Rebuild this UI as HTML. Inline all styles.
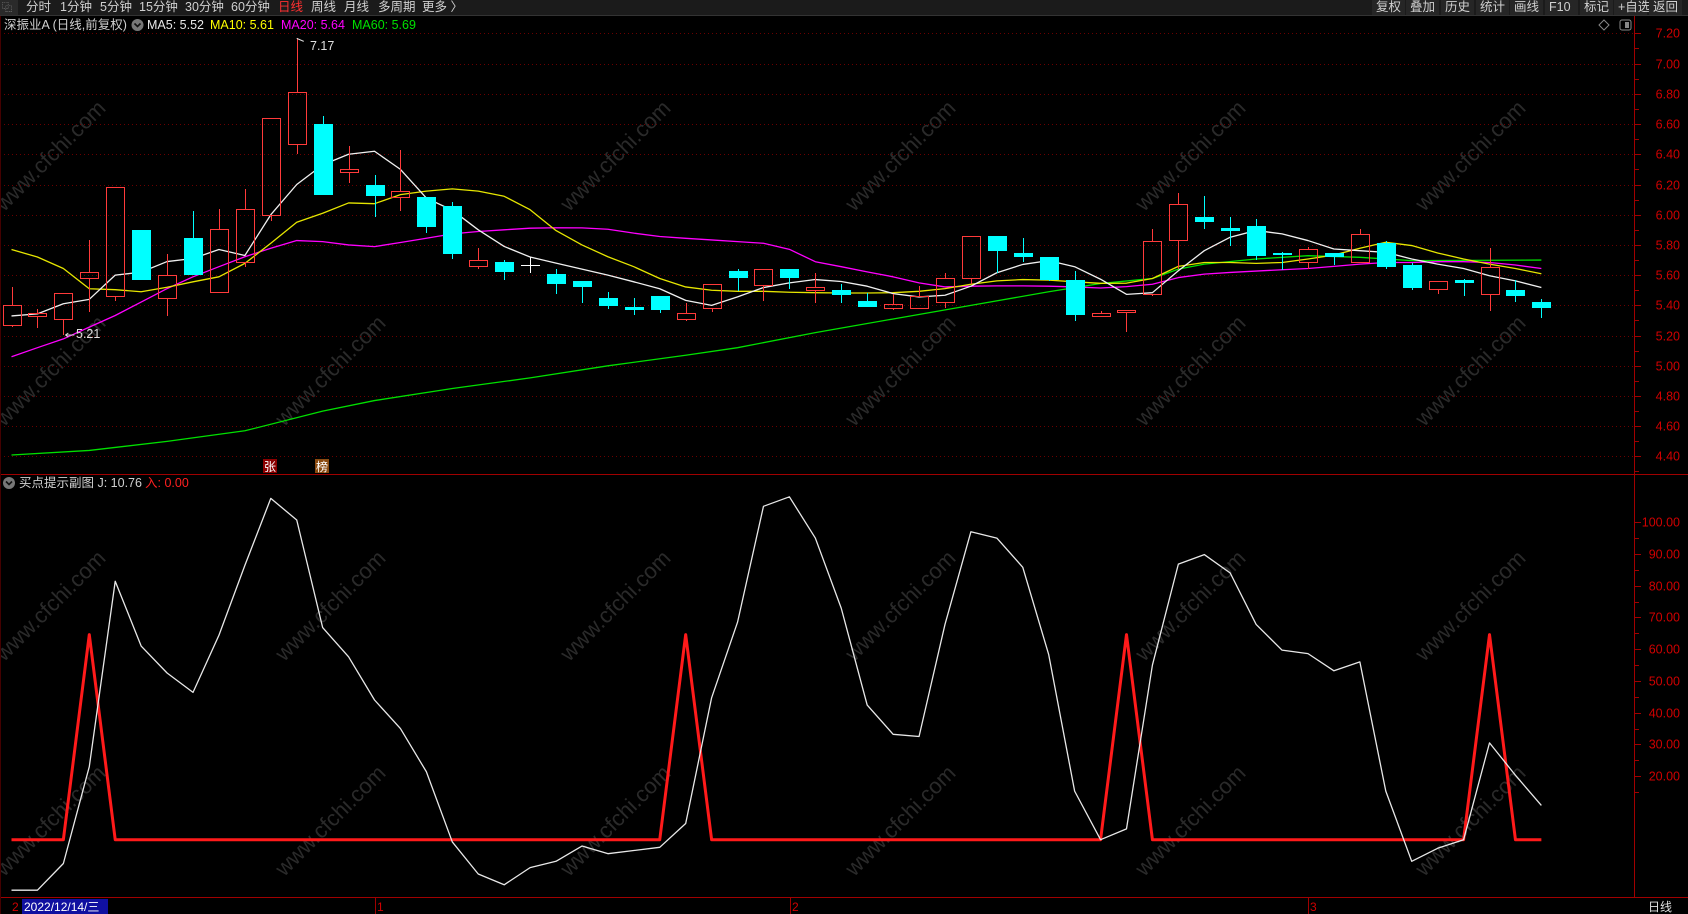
<!DOCTYPE html>
<html><head><meta charset="utf-8">
<style>
html,body{margin:0;padding:0;background:#000;width:1688px;height:914px;overflow:hidden}
svg{display:block}
text{font-family:"Liberation Sans","Noto Sans CJK SC",sans-serif}
</style></head>
<body>
<svg id="s" width="1688" height="914" viewBox="0 0 1688 914" xmlns="http://www.w3.org/2000/svg">
<rect width="1688" height="914" fill="#000"/>
<g id="wm" fill="#2a2a2a" font-size="22"></g>
<g id="grid"></g>
<!-- top bar -->
<rect x="0" y="0" width="1688" height="15" fill="#1b1b1b"/>
<rect x="0" y="0" width="18" height="15" fill="#2a2a2a"/>
<text x="2" y="11" font-size="10" fill="#bbb">⿻</text>
<g font-size="12.5" fill="#d0d0d0">
<text x="26" y="11">分时</text><text x="60" y="11">1分钟</text><text x="100" y="11">5分钟</text>
<text x="139" y="11">15分钟</text><text x="185" y="11">30分钟</text><text x="231" y="11">60分钟</text>
<text x="278" y="11" fill="#ff3030">日线</text><text x="311" y="11">周线</text><text x="344" y="11">月线</text>
<text x="378" y="11">多周期</text><text x="422" y="11">更多 〉</text>
</g>
<g id="btns" font-size="12.5" fill="#d0d0d0"></g>
<line x1="0" y1="15.5" x2="1688" y2="15.5" stroke="#333"/>
<!-- info -->
<text x="4" y="29" font-size="12.5" fill="#d0d0d0">深振业A (日线,前复权)</text>
<circle cx="137.5" cy="25" r="6" fill="#777"/><path d="M134.5 23.5 L137.5 26.5 L140.5 23.5" stroke="#111" stroke-width="1.6" fill="none"/>
<text x="147" y="29" font-size="12.5" fill="#e8e8e8">MA5: 5.52</text>
<text x="210" y="29" font-size="12.5" fill="#ffff00">MA10: 5.61</text>
<text x="281" y="29" font-size="12.5" fill="#ff00ff">MA20: 5.64</text>
<text x="352" y="29" font-size="12.5" fill="#00e000">MA60: 5.69</text>
<path d="M1604 20 L1609 25 L1604 30 L1599 25 Z" stroke="#888" fill="none"/>
<rect x="1620" y="20" width="11" height="10" rx="2" stroke="#888" fill="none"/><rect x="1625" y="22" width="4" height="6" fill="#888"/>
<g id="main"></g>
<!-- axes -->
<line x1="1634.5" y1="16" x2="1634.5" y2="897" stroke="#a00000"/>
<line x1="0" y1="474.5" x2="1688" y2="474.5" stroke="#a00000"/>
<line x1="0" y1="897.5" x2="1688" y2="897.5" stroke="#a00000"/>
<line x1="0.5" y1="16" x2="0.5" y2="914" stroke="#400"/>
<g id="axis" font-size="12.5" fill="#d00000" text-anchor="end"></g>
<!-- tags -->
<rect x="263" y="459" width="14" height="14" fill="#8a0000"/><text x="264" y="471" font-size="12" fill="#fff">张</text>
<rect x="315" y="459" width="14" height="14" fill="#8a4a10"/><text x="316" y="471" font-size="12" fill="#fff">榜</text>
<!-- sub label -->
<circle cx="9" cy="483" r="6" fill="#777"/><path d="M6 481.5 L9 484.5 L12 481.5" stroke="#111" stroke-width="1.6" fill="none"/>
<text x="19" y="487" font-size="12.5" fill="#d0d0d0">买点提示副图  J: 10.76</text>
<text x="145" y="487" font-size="12.5" fill="#ff2020">入: 0.00</text>
<g id="sub"></g>
<!-- bottom axis -->
<rect x="22" y="899" width="86" height="15" fill="#1010a0"/>
<text x="12" y="911" font-size="12" fill="#d00000">2</text>
<text x="24" y="911" font-size="12" fill="#fff">2022/12/14/三</text>
<g stroke="#a00000"><line x1="375.5" y1="897" x2="375.5" y2="914"/><line x1="790.5" y1="897" x2="790.5" y2="914"/><line x1="1308.5" y1="897" x2="1308.5" y2="914"/></g>
<g font-size="12" fill="#d00000"><text x="377" y="911">1</text><text x="792" y="911">2</text><text x="1310" y="911">3</text></g>
<text x="1648" y="911" font-size="12" fill="#e0e0e0">日线</text>
</svg>
<script>
const NS="http://www.w3.org/2000/svg";
function el(p,t,a,txt){const e=document.createElementNS(NS,t);for(const k in a)e.setAttribute(k,a[k]);if(txt!==undefined)e.textContent=txt;p.appendChild(e);return e;}
const X=i=>11.5+i*25.93, Y=p=>33.4+(7.2-p)*151.1, SY=v=>839.7-v*3.175;
// watermarks
const wm=document.getElementById('wm');
[[55,150],[620,150],[905,150],[1195,150],[1475,150],[55,365],[335,365],[905,365],[1195,365],[1475,365],[55,600],[335,600],[620,600],[905,600],[1195,600],[1475,600],[55,815],[335,815],[620,815],[905,815],[1195,815],[1475,815]].forEach(([x,y])=>el(wm,'text',{x:x-80,y:y+8,transform:`rotate(-45 ${x} ${y})`},'www.cfchi.com'));
// grid
const g=document.getElementById('grid'), ax=document.getElementById('axis');
for(let k=0;k<=14;k++){const p=7.2-k*0.2,y=Math.round(Y(p))+0.5;
 el(g,'line',{x1:0,y1:y,x2:1634,y2:y,stroke:'#6a0000','stroke-dasharray':'1 3'});
 el(ax,'line',{x1:1634,y1:y,x2:1641,y2:y,stroke:'#a00000'});
 el(ax,'line',{x1:1634,y1:y+15,x2:1639,y2:y+15,stroke:'#a00000'});
 el(ax,'text',{x:1680,y:y+4},p.toFixed(2));}
for(let k=0;k<=8;k++){const v=100-k*10,y=Math.round(SY(v))+0.5;
 el(ax,'line',{x1:1634,y1:y,x2:1641,y2:y,stroke:'#a00000'});
 el(ax,'line',{x1:1634,y1:y+16,x2:1639,y2:y+16,stroke:'#a00000'});
 if(v>0)el(ax,'text',{x:1680,y:y+4},v.toFixed(2));}
// buttons
const b=document.getElementById('btns');
[['复权',1372],['叠加',1406],['历史',1441],['统计',1476],['画线',1510],['F10',1545],['标记',1580],['+自选',1614],['返回',1649]].forEach(([t,x])=>{el(b,'rect',{x:x,y:0,width:33,height:15,fill:'#262626'});el(b,'text',{x:x+4,y:11},t);});
// candles [top,bottom,high,low,color]
const C=[[5.405,5.271,5.522,5.256,'r'],[5.351,5.331,5.378,5.249,'r'],[5.484,5.311,5.484,5.204,'r'],[5.624,5.578,5.833,5.356,'r'],[6.184,5.462,6.184,5.429,'r'],
[5.9,5.569,5.9,5.569,'c'],[5.604,5.451,5.74,5.329,'r'],[5.847,5.602,6.027,5.602,'c'],[5.904,5.491,6.04,5.491,'r'],[6.038,5.684,6.171,5.651,'r'],
[6.638,5.998,6.638,5.956,'r'],[6.811,6.471,7.167,6.4,'r'],[6.598,6.129,6.653,6.129,'c'],[6.3,6.282,6.456,6.207,'r'],[6.2,6.122,6.262,5.982,'c'],
[6.158,6.118,6.427,6.022,'r'],[6.12,5.922,6.12,5.882,'c'],[6.06,5.742,6.087,5.707,'c'],[5.7,5.658,5.78,5.642,'r'],[5.687,5.622,5.7,5.571,'c'],
[5.664,5.664,5.722,5.611,'w'],[5.607,5.54,5.644,5.478,'c'],[5.56,5.522,5.56,5.416,'c'],[5.447,5.396,5.487,5.376,'c'],[5.387,5.369,5.447,5.336,'c'],
[5.464,5.369,5.464,5.349,'c'],[5.351,5.311,5.418,5.296,'r'],[5.544,5.384,5.544,5.356,'r'],[5.627,5.582,5.638,5.493,'c'],[5.638,5.538,5.638,5.429,'r'],
[5.638,5.582,5.638,5.511,'c'],[5.524,5.504,5.611,5.416,'r'],[5.504,5.469,5.544,5.416,'c'],[5.427,5.389,5.484,5.389,'c'],[5.411,5.384,5.478,5.369,'r'],
[5.462,5.384,5.531,5.376,'r'],[5.584,5.424,5.611,5.384,'r'],[5.858,5.584,5.858,5.54,'r'],[5.858,5.762,5.858,5.616,'c'],[5.747,5.722,5.847,5.687,'c'],
[5.72,5.567,5.72,5.56,'c'],[5.567,5.336,5.627,5.296,'c'],[5.349,5.331,5.36,5.32,'r'],[5.371,5.356,5.371,5.222,'r'],[5.824,5.478,5.907,5.462,'r'],
[6.073,5.831,6.147,5.64,'r'],[5.987,5.949,6.127,5.907,'c'],[5.913,5.889,5.984,5.796,'c'],[5.927,5.729,5.973,5.7,'c'],[5.747,5.733,5.756,5.636,'c'],
[5.771,5.684,5.784,5.644,'r'],[5.749,5.718,5.749,5.669,'c'],[5.873,5.684,5.907,5.684,'r'],[5.811,5.656,5.824,5.638,'c'],[5.667,5.516,5.68,5.502,'c'],
[5.564,5.511,5.564,5.476,'r'],[5.567,5.549,5.573,5.462,'c'],[5.651,5.478,5.778,5.362,'r'],[5.5,5.462,5.567,5.422,'c'],[5.42,5.382,5.44,5.316,'c']];
const m=document.getElementById('main');
const line=(pts,col,par)=>el(par||m,'polyline',{points:pts.map(q=>q.join(',')).join(' '),fill:'none',stroke:col,'stroke-width':1.3,'stroke-linejoin':'round'});
// MAs
const ma5=[5.33,5.344,5.411,5.44,5.6,5.62,5.69,5.71,5.77,5.73,6.0,6.2,6.33,6.4,6.42,6.3,6.11,6.03,5.9,5.79,5.72,5.68,5.64,5.6,5.556,5.51,5.433,5.4,5.456,5.518,5.549,5.571,5.558,5.527,5.478,5.456,5.467,5.527,5.616,5.671,5.696,5.656,5.573,5.473,5.484,5.629,5.762,5.851,5.896,5.873,5.829,5.773,5.762,5.751,5.707,5.673,5.644,5.596,5.562,5.518];
const ma10=[5.77,5.72,5.644,5.51,5.504,5.49,5.52,5.556,5.589,5.678,5.811,5.95,6.01,6.078,6.073,6.133,6.156,6.171,6.156,6.122,6.033,5.895,5.8,5.722,5.656,5.578,5.522,5.5,5.493,5.493,5.487,5.484,5.482,5.482,5.484,5.493,5.511,5.54,5.562,5.571,5.567,5.556,5.546,5.547,5.578,5.658,5.684,5.684,5.678,5.684,5.707,5.733,5.778,5.818,5.796,5.747,5.707,5.673,5.644,5.609];
const ma20=[5.06,5.12,5.178,5.256,5.333,5.422,5.511,5.589,5.656,5.722,5.778,5.829,5.822,5.8,5.789,5.816,5.844,5.873,5.889,5.9,5.911,5.914,5.913,5.904,5.878,5.856,5.844,5.833,5.822,5.811,5.771,5.689,5.656,5.622,5.589,5.549,5.522,5.527,5.529,5.529,5.527,5.522,5.515,5.524,5.54,5.584,5.607,5.618,5.627,5.636,5.644,5.658,5.673,5.684,5.684,5.689,5.689,5.684,5.667,5.644];
const ma60=[[0,4.41],[3,4.44],[6,4.5],[9,4.57],[12,4.7],[14,4.77],[17,4.85],[20,4.92],[23,5.0],[26,5.07],[28,5.12],[31,5.22],[34,5.31],[37,5.40],[40,5.49],[42,5.545],[44,5.578],[45,5.64],[46,5.673],[48,5.707],[50,5.729],[52,5.718],[54,5.696],[59,5.70]];
line(ma60.map(([i,p])=>[X(i),Y(p)]),'#00e000');
line(ma20.map((p,i)=>[X(i),Y(p)]),'#ff00ff');
line(ma10.map((p,i)=>[X(i),Y(p)]),'#e6e600');
line(ma5.map((p,i)=>[X(i),Y(p)]),'#f0f0f0');
C.forEach(([t,bt,h,l,c],i)=>{const x=Math.round(X(i));const yt=Math.round(Y(t)),yb=Math.round(Y(bt)),yh=Math.round(Y(h)),yl=Math.round(Y(l));
 if(c==='r'){el(m,'line',{x1:x+.5,y1:yh,x2:x+.5,y2:yt,stroke:'#ff3a3a'});el(m,'line',{x1:x+.5,y1:yb,x2:x+.5,y2:yl,stroke:'#ff3a3a'});
  el(m,'rect',{x:x-8.5,y:yt+.5,width:18,height:Math.max(yb-yt,2),fill:'none',stroke:'#ff3a3a'});}
 else if(c==='c'){el(m,'line',{x1:x+.5,y1:yh,x2:x+.5,y2:yl,stroke:'#00ffff'});el(m,'rect',{x:x-9,y:yt,width:19,height:Math.max(yb-yt,2),fill:'#00ffff'});}
 else{el(m,'line',{x1:x+.5,y1:yh,x2:x+.5,y2:yl,stroke:'#fff'});el(m,'line',{x1:x-9,y1:yt+.5,x2:x+10,y2:yt+.5,stroke:'#fff'});}
});
el(m,'path',{d:`M${X(11)} ${Y(7.167)} l7 3`,stroke:'#ddd',fill:'none'});
el(m,'text',{x:310,y:50,'font-size':12.5,fill:'#e0e0e0'},'7.17');
el(m,'path',{d:`M${X(2)+2} ${Y(5.204)} l9 0 M${X(2)+2} ${Y(5.204)} l3 -2 M${X(2)+2} ${Y(5.204)} l3 2`,stroke:'#ddd',fill:'none'});
el(m,'text',{x:76,y:338,'font-size':12.5,fill:'#e0e0e0'},'5.21');
// sub chart
const s=document.getElementById('sub');
const J=[-15.9,-15.9,-7.5,23,81.4,61,52.5,46.4,64.4,86.4,107.5,100.7,66.8,57.6,44,35,21.4,-0.7,-10.8,-14.2,-8.8,-6.8,-2,-4.4,-3.4,-2.4,5.1,44.7,68.5,105,108,95,72.9,42.4,33.2,32.5,67.8,97,95,85.8,58.3,15.3,0,3.4,55,86.8,89.8,84,67.8,59.7,58.6,53.2,56,15.3,-6.8,-2.7,0,30.5,20.3,10.8];
const R=[];const spikes=[3,26,43,57];
for(let i=0;i<60;i++){R.push([X(i),SY(spikes.includes(i)?64.6:0)]);}
line(R,'#ff1a1a',s).setAttribute('stroke-width','3');
line(J.map((v,i)=>[X(i),SY(v)]),'#e8e8e8',s);
</script>
</body></html>
